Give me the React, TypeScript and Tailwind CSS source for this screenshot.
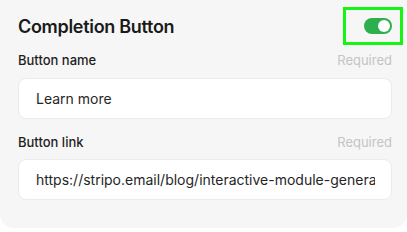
import React from "react"

type FieldProps = {
    label: string
    value: string
    labelGap: string
    inputGap: string
}

function Field({ label, value, labelGap, inputGap }: FieldProps) {
    return (
        <div className={labelGap}>
            <div className="flex h-[18px] items-center justify-between text-[13px] leading-[18px]">
                <span className="font-medium text-[#1f1f1f]">{label}</span>
                <span className="text-[#c4c4c4]">Required</span>
            </div>
            <div
                className={`${inputGap} flex h-[41px] items-center overflow-hidden rounded-[8px] border border-[#ebebeb] bg-white pl-[17px] pr-[16px]`}
            >
                <span className="overflow-hidden whitespace-nowrap text-[14px] text-[#262626]">
                    {value}
                </span>
            </div>
        </div>
    )
}

export default function App() {
    return (
        <main
            className="h-[232px] w-[407px] bg-white"
            style={{ fontFamily: "Inter, 'Noto Sans', sans-serif" }}
        >
            <section className="h-[228px] rounded-b-[14px] bg-[#f6f6f6] pl-[18px] pr-[15px] pt-[7px]">
                <header className="flex h-[38px] items-center justify-between">
                    <h2 className="text-[18px] font-semibold tracking-[-0.3px] text-[#1a1a1a]">
                        Completion Button
                    </h2>
                    <div className="mr-[-11px] flex h-[38px] w-[60px] items-center justify-end border-[3px] border-[#14f514] pr-[8px]">
                        <button className="flex h-[16px] w-[28px] items-center justify-end rounded-full bg-[#2eaf4d] pr-[2px]">
                            <span className="h-[12px] w-[12px] rounded-full bg-white" />
                        </button>
                    </div>
                </header>

                <Field
                    label="Button name"
                    value="Learn more"
                    labelGap="mt-[6px]"
                    inputGap="mt-[9px]"
                />
                <Field
                    label="Button link"
                    value="https://stripo.email/blog/interactive-module-generator"
                    labelGap="mt-[14px]"
                    inputGap="mt-[8px]"
                />
            </section>
        </main>
    )
}
